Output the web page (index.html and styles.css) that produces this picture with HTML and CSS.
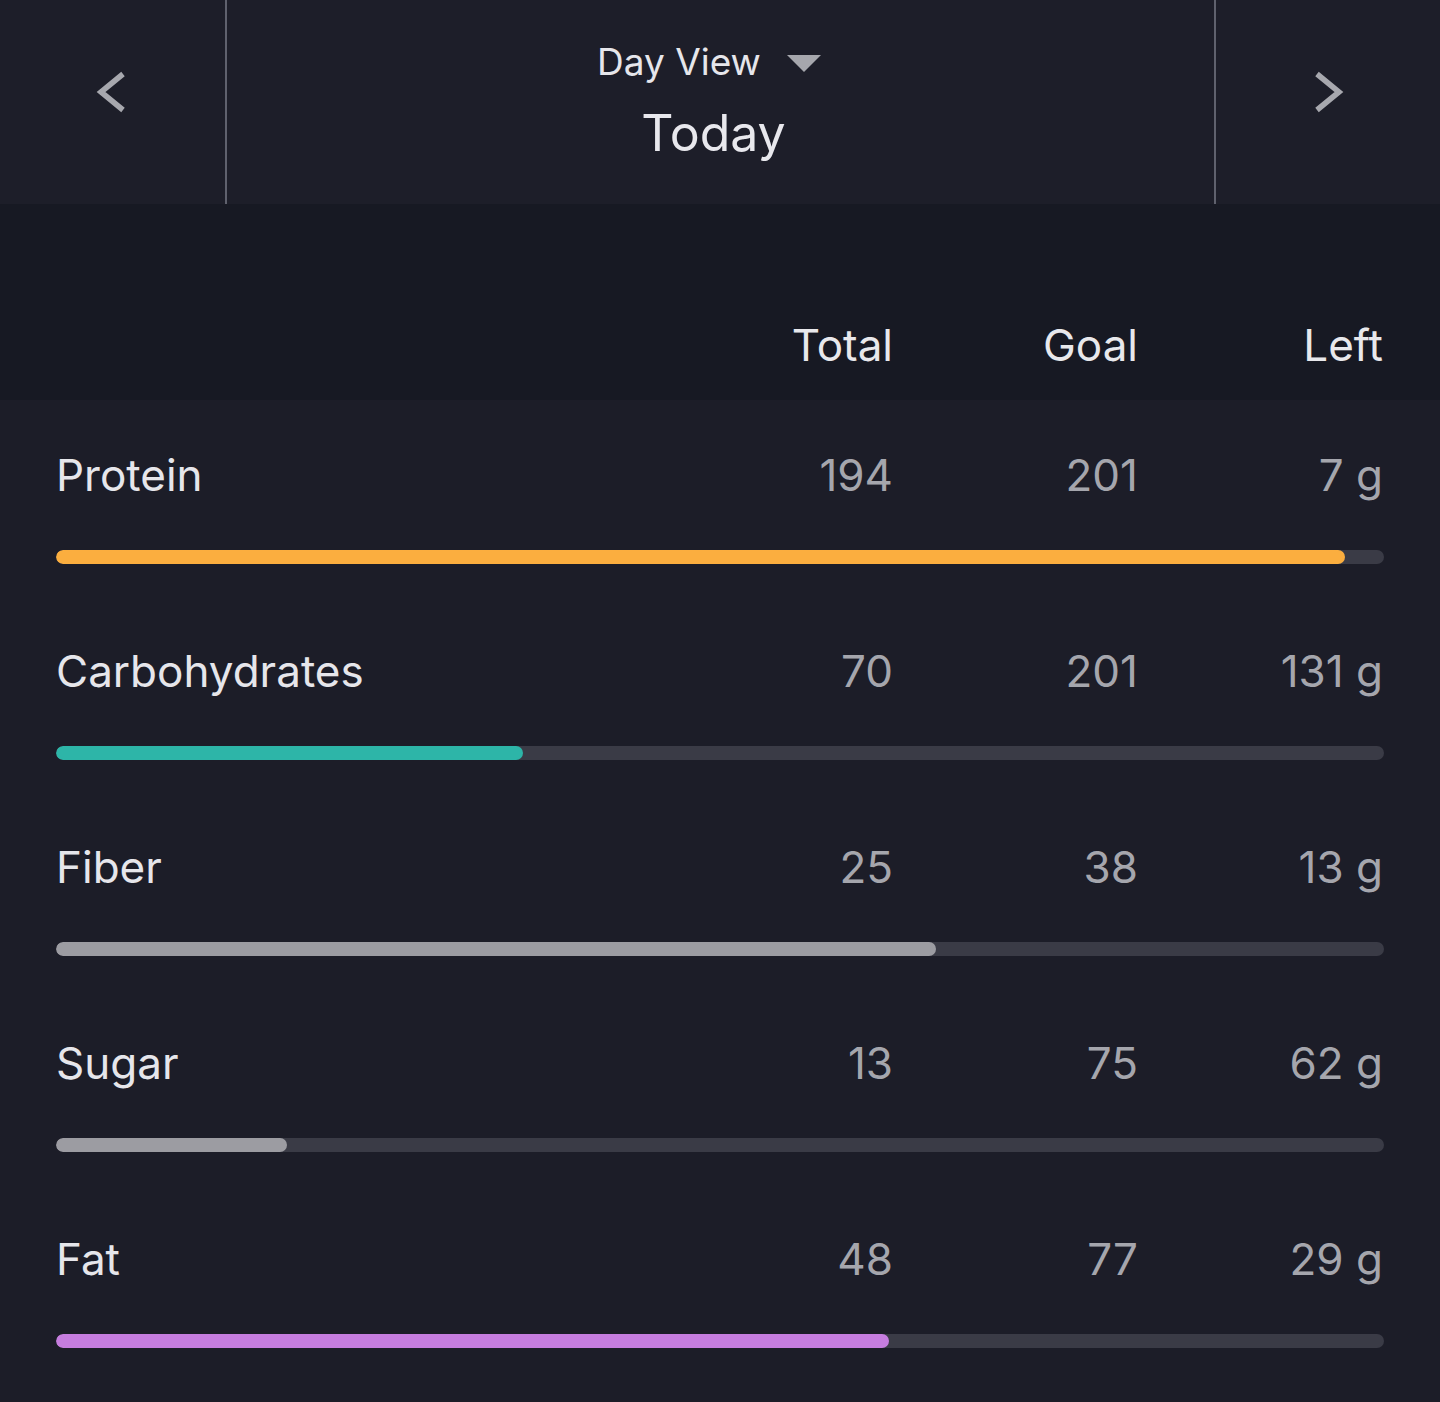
FILE: index.html
```html
<!DOCTYPE html>
<html lang="en">
<head>
<meta charset="utf-8">
<title>Day View</title>
<link rel="stylesheet" href="styles.css">
</head>
<body>
<div class="app">
  <header class="topbar">
    <button class="nav nav-left" aria-label="Previous">
      <svg width="40" height="60" viewBox="0 0 40 60"><polyline points="31,12 9,30 31,48" fill="none" stroke="#a7a8ae" stroke-width="5.5" stroke-linejoin="miter"/></svg>
    </button>
    <div class="title">
      <div class="view">Day View <span class="caret"></span></div>
      <div class="date">Today</div>
    </div>
    <button class="nav nav-right" aria-label="Next">
      <svg width="40" height="60" viewBox="0 0 40 60"><polyline points="9,12 31,30 9,48" fill="none" stroke="#a7a8ae" stroke-width="5.5" stroke-linejoin="miter"/></svg>
    </button>
  </header>

  <div class="colhead">
    <span></span>
    <span class="num">Total</span>
    <span class="num">Goal</span>
    <span class="num">Left</span>
  </div>

  <div class="rows">
    <div class="row">
      <div class="line"><span class="name">Protein</span><span class="val">194</span><span class="val">201</span><span class="val">7 g</span></div>
      <div class="track"><div class="fill protein" style="width:97.1%"></div></div>
    </div>
    <div class="row">
      <div class="line"><span class="name">Carbohydrates</span><span class="val">70</span><span class="val">201</span><span class="val">131 g</span></div>
      <div class="track"><div class="fill carbs" style="width:35.2%"></div></div>
    </div>
    <div class="row">
      <div class="line"><span class="name">Fiber</span><span class="val">25</span><span class="val">38</span><span class="val">13 g</span></div>
      <div class="track"><div class="fill gray" style="width:66.3%"></div></div>
    </div>
    <div class="row">
      <div class="line"><span class="name">Sugar</span><span class="val">13</span><span class="val">75</span><span class="val">62 g</span></div>
      <div class="track"><div class="fill gray" style="width:17.4%"></div></div>
    </div>
    <div class="row">
      <div class="line"><span class="name">Fat</span><span class="val">48</span><span class="val">77</span><span class="val">29 g</span></div>
      <div class="track"><div class="fill fat" style="width:62.7%"></div></div>
    </div>
  </div>
</div>
</body>
</html>
```

FILE: styles.css
```css
* { box-sizing: border-box; }
html, body {
  margin: 0;
  padding: 0;
  background: #1c1d28;
}
body {
  font-family: Inter, "Noto Sans", "Liberation Sans", sans-serif;
  color: #e6e6eb;
  width: 1440px;
  min-height: 1402px;
}
.topbar {
  height: 204px;
  display: grid;
  grid-template-columns: 227px 1fr 226px;
  background: #1d1e29;
}
.nav {
  background: none;
  border: none;
  padding: 0;
  display: flex;
  align-items: center;
  justify-content: center;
  cursor: pointer;
}
.nav-left {
  border-right: 2px solid #5f616d;
  padding-bottom: 20px;
  padding-right: 2px;
}
.nav-right {
  border-left: 2px solid #5f616d;
  padding-bottom: 20px;
}
.nav svg { display: block; }
.title {
  display: flex;
  flex-direction: column;
  align-items: center;
  padding-top: 37px;
}
.view {
  font-size: 37px;
  line-height: 50px;
  color: #e6e6eb;
  display: flex;
  align-items: center;
  margin-left: -23px;
}
.caret {
  display: inline-block;
  width: 0;
  height: 0;
  border-left: 17px solid transparent;
  border-right: 17px solid transparent;
  border-top: 17px solid #a6a7ad;
  margin-left: 26px;
  margin-top: 2px;
}
.date {
  font-size: 50px;
  line-height: 60px;
  margin-top: 16px;
  margin-left: -14px;
  color: #e8e8ed;
}
.colhead {
  background: #171923;
  height: 196px;
  display: grid;
  grid-template-columns: 1fr 245px 245px 245px;
  padding: 113px 57px 0 56px;
  font-size: 44px;
  line-height: 56px;
  color: #e8e8ec;
}
.num { text-align: right; }
.row {
  height: 196px;
  padding: 47px 56px 0 56px;
  display: flex;
  flex-direction: column;
}
.line {
  display: grid;
  grid-template-columns: 1fr 245px 245px 245px;
  font-size: 44px;
  line-height: 56px;
  height: 56px;
  padding-right: 1px;
}
.name { color: #e6e6eb; }
.val {
  text-align: right;
  color: #a5a6ad;
}
.track {
  margin-top: 47px;
  height: 14px;
  border-radius: 7px;
  background: #3a3b46;
  overflow: hidden;
}
.fill {
  height: 100%;
  border-radius: 7px;
}
.protein { background: #fbae3f; }
.carbs { background: #2db5a8; }
.gray { background: #9c9ca2; }
.fat { background: #c67ddf; }
```
